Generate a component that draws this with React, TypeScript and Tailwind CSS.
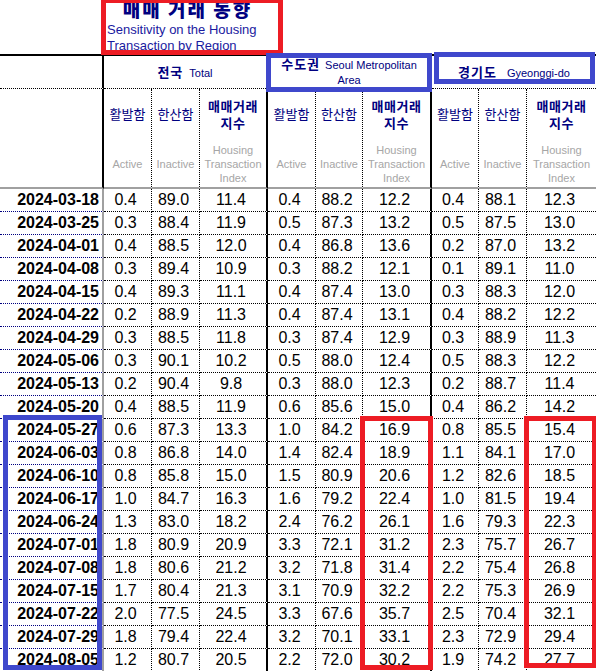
import React from "react";

const data: [string, string[]][] = [
  ["2024-03-18", ["0.4", "89.0", "11.4", "0.4", "88.2", "12.2", "0.4", "88.1", "12.3"]],
  ["2024-03-25", ["0.3", "88.4", "11.9", "0.5", "87.3", "13.2", "0.5", "87.5", "13.0"]],
  ["2024-04-01", ["0.4", "88.5", "12.0", "0.4", "86.8", "13.6", "0.2", "87.0", "13.2"]],
  ["2024-04-08", ["0.3", "89.4", "10.9", "0.3", "88.2", "12.1", "0.1", "89.1", "11.0"]],
  ["2024-04-15", ["0.4", "89.3", "11.1", "0.4", "87.4", "13.0", "0.3", "88.3", "12.0"]],
  ["2024-04-22", ["0.2", "88.9", "11.3", "0.4", "87.4", "13.1", "0.4", "88.2", "12.2"]],
  ["2024-04-29", ["0.3", "88.5", "11.8", "0.3", "87.4", "12.9", "0.3", "88.9", "11.3"]],
  ["2024-05-06", ["0.3", "90.1", "10.2", "0.5", "88.0", "12.4", "0.5", "88.3", "12.2"]],
  ["2024-05-13", ["0.2", "90.4", "9.8", "0.3", "88.0", "12.3", "0.2", "88.7", "11.4"]],
  ["2024-05-20", ["0.4", "88.5", "11.9", "0.6", "85.6", "15.0", "0.4", "86.2", "14.2"]],
  ["2024-05-27", ["0.6", "87.3", "13.3", "1.0", "84.2", "16.9", "0.8", "85.5", "15.4"]],
  ["2024-06-03", ["0.8", "86.8", "14.0", "1.4", "82.4", "18.9", "1.1", "84.1", "17.0"]],
  ["2024-06-10", ["0.8", "85.8", "15.0", "1.5", "80.9", "20.6", "1.2", "82.6", "18.5"]],
  ["2024-06-17", ["1.0", "84.7", "16.3", "1.6", "79.2", "22.4", "1.0", "81.5", "19.4"]],
  ["2024-06-24", ["1.3", "83.0", "18.2", "2.4", "76.2", "26.1", "1.6", "79.3", "22.3"]],
  ["2024-07-01", ["1.8", "80.9", "20.9", "3.3", "72.1", "31.2", "2.3", "75.7", "26.7"]],
  ["2024-07-08", ["1.8", "80.6", "21.2", "3.2", "71.8", "31.4", "2.2", "75.4", "26.8"]],
  ["2024-07-15", ["1.7", "80.4", "21.3", "3.1", "70.9", "32.2", "2.2", "75.3", "26.9"]],
  ["2024-07-22", ["2.0", "77.5", "24.5", "3.3", "67.6", "35.7", "2.5", "70.4", "32.1"]],
  ["2024-07-29", ["1.8", "79.4", "22.4", "3.2", "70.1", "33.1", "2.3", "72.9", "29.4"]],
  ["2024-08-05", ["1.2", "80.7", "20.5", "2.2", "72.0", "30.2", "1.9", "74.2", "27.7"]],
];

const KR = "font-['Noto_Sans_CJK_KR',sans-serif]";
const rDot = "border-r border-r-black [border-right-style:dotted]";
const rSolid = "border-r-2 border-r-black";
const rb = (i: number) => (i === 8 ? "" : i % 3 === 2 ? rSolid : rDot);

function SubHead({ i }: { i: number }) {
  const k = i % 3;
  return (
    <div className={`h-[100px] border-b-2 border-b-[#a0a0a0] flex flex-col ${rb(i)}`}>
      <div className="h-[49px] flex items-center justify-center">
        {k === 0 && <span className={`${KR} text-[13px] text-[#000080]`}>활발함</span>}
        {k === 1 && <span className={`${KR} text-[13px] text-[#000080]`}>한산함</span>}
        {k === 2 && (
          <div className={`${KR} text-[13px] font-bold tracking-[0.5px] text-center text-[#000080]`}>
            <div className="h-[17px] leading-[17px]">매매거래</div>
            <div className="h-[17px] leading-[17px]">지수</div>
          </div>
        )}
      </div>
      <div className="flex-1 flex items-center justify-center pt-[3px] text-[11px] leading-[14px] text-[#a6a6a6] text-center">
        {k === 0 && <span>Active</span>}
        {k === 1 && <span>Inactive</span>}
        {k === 2 && (
          <div>
            Housing
            <br />
            Transaction
            <br />
            Index
          </div>
        )}
      </div>
    </div>
  );
}

export default function App() {
  return (
    <div className="relative w-[596px] h-[671px] overflow-hidden bg-white font-['Liberation_Sans',Arial,sans-serif] text-black">
      <div className="grid grid-cols-[104px_48px_48px_68px_48px_47px_69px_47px_48px_69px]">
        {/* Title row */}
        <div className="h-[56px] border-b-2 border-b-black" />
        <div className="col-span-3 h-[56px] border-b-2 border-b-black pl-[3px] overflow-hidden">
          <div className={`${KR} -mt-[1px] text-center text-[19px] leading-[20px] font-black tracking-[2px] whitespace-nowrap text-[#000080]`}>
            매매 거래 동향
          </div>
          <div className="mt-[3px] text-[13px] leading-[16px] whitespace-nowrap text-[#1a1aa0]">
            Sensitivity on the Housing
            <br />
            Transaction by Region
          </div>
        </div>
        <div className="col-span-6 h-[56px] border-b-2 border-b-black" />

        {/* Region header row */}
        <div className="h-[33px] border-r-2 border-r-black border-b border-b-black [border-bottom-style:dotted]" />
        <div className="col-span-3 h-[33px] border-r-2 border-r-black border-b border-b-black [border-bottom-style:dotted] flex items-center justify-center">
          <div className="flex items-baseline text-[#000080]">
            <span className={`${KR} text-[13px] font-bold tracking-[1px]`}>전국</span>
            <span className="ml-[6px] text-[11px]">Total</span>
          </div>
        </div>
        <div className="col-span-3 h-[33px] border-r-2 border-r-black border-b border-b-black [border-bottom-style:dotted] flex items-center justify-center px-[2px]">
          <div className="text-center leading-[14px] text-[#000080]">
            <span className={`${KR} text-[13px] font-bold tracking-[1px]`}>수도권</span>
            <span className="ml-[5px] text-[11px]">Seoul Metropolitan Area</span>
          </div>
        </div>
        <div className="col-span-3 h-[33px] border-b border-b-black [border-bottom-style:dotted] flex items-center justify-center">
          <div className="flex items-baseline text-[#000080]">
            <span className={`${KR} text-[13px] font-bold tracking-[1px]`}>경기도</span>
            <span className="ml-[10px] text-[11px]">Gyeonggi-do</span>
          </div>
        </div>

        {/* Sub header row */}
        <div className="h-[100px] border-r-2 border-r-black border-b-2 border-b-[#a0a0a0]" />
        {Array.from({ length: 9 }).map((_, i) => (
          <SubHead key={i} i={i} />
        ))}

        {/* Data rows */}
        {data.map(([date, vals]) => (
          <React.Fragment key={date}>
            <div className="h-[23px] border-r-2 border-r-[#a0a0a0] border-b border-b-[#000080] [border-bottom-style:dotted] flex items-center justify-end pr-[3px] text-[16px] font-bold whitespace-nowrap">
              {date}
            </div>
            {vals.map((v, i) => (
              <div
                key={i}
                className={`h-[23px] border-b border-b-black [border-bottom-style:dotted] flex items-center justify-center pr-[4px] text-[16px] ${rb(i)}`}
              >
                {v}
              </div>
            ))}
          </React.Fragment>
        ))}
      </div>

      {/* Annotation boxes */}
      <div className="absolute left-[101px] top-[-2px] w-[182px] h-[57px] border-[5px] border-[#ed1c24]" />
      <div className="absolute left-[266px] top-[53px] w-[166px] h-[39px] border-[5px] border-[#3f48cc]" />
      <div className="absolute left-[434px] top-[52px] w-[161px] h-[32px] border-[5px] border-[#3f48cc]" />
      <div className="absolute left-[3px] top-[415px] w-[99px] h-[255px] border-[5px] border-[#3f48cc]" />
      <div className="absolute left-[360px] top-[416px] w-[73px] h-[254px] border-[5px] border-[#ed1c24]" />
      <div className="absolute left-[524px] top-[416px] w-[73px] h-[252px] border-[5px] border-[#ed1c24]" />
    </div>
  );
}
